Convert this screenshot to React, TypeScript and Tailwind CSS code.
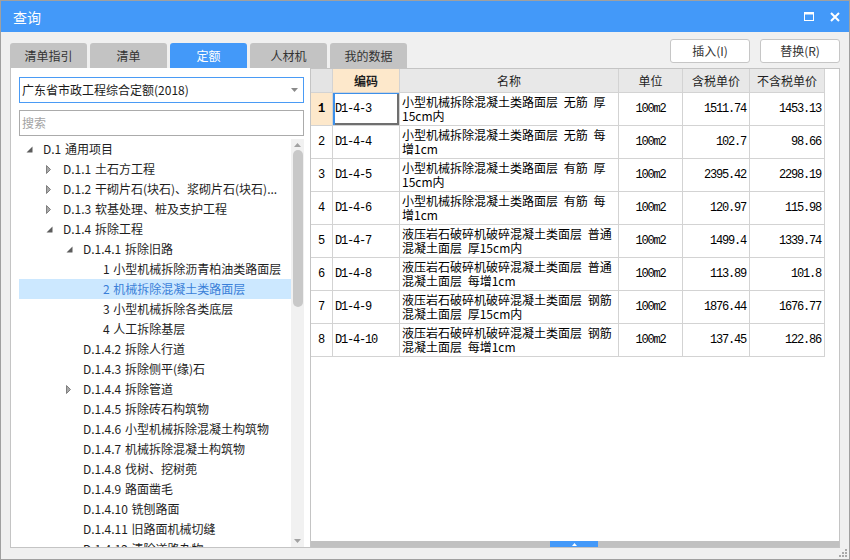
import React from 'react'

type Node = { level: number; kind: 'open' | 'closed' | 'leaf'; text: string; selected?: boolean }

const TREE: Node[] = [
  { level: 0, kind: 'open', text: 'D.1 通用项目' },
  { level: 1, kind: 'closed', text: 'D.1.1 土石方工程' },
  { level: 1, kind: 'closed', text: 'D.1.2 干砌片石(块石)、浆砌片石(块石)...' },
  { level: 1, kind: 'closed', text: 'D.1.3 软基处理、桩及支护工程' },
  { level: 1, kind: 'open', text: 'D.1.4 拆除工程' },
  { level: 2, kind: 'open', text: 'D.1.4.1 拆除旧路' },
  { level: 3, kind: 'leaf', text: '1 小型机械拆除沥青柏油类路面层' },
  { level: 3, kind: 'leaf', text: '2 机械拆除混凝土类路面层', selected: true },
  { level: 3, kind: 'leaf', text: '3 小型机械拆除各类底层' },
  { level: 3, kind: 'leaf', text: '4 人工拆除基层' },
  { level: 2, kind: 'leaf', text: 'D.1.4.2 拆除人行道' },
  { level: 2, kind: 'leaf', text: 'D.1.4.3 拆除侧平(缘)石' },
  { level: 2, kind: 'closed', text: 'D.1.4.4 拆除管道' },
  { level: 2, kind: 'leaf', text: 'D.1.4.5 拆除砖石构筑物' },
  { level: 2, kind: 'leaf', text: 'D.1.4.6 小型机械拆除混凝土构筑物' },
  { level: 2, kind: 'leaf', text: 'D.1.4.7 机械拆除混凝土构筑物' },
  { level: 2, kind: 'leaf', text: 'D.1.4.8 伐树、挖树蔸' },
  { level: 2, kind: 'leaf', text: 'D.1.4.9 路面凿毛' },
  { level: 2, kind: 'leaf', text: 'D.1.4.10 铣刨路面' },
  { level: 2, kind: 'leaf', text: 'D.1.4.11 旧路面机械切缝' },
  { level: 2, kind: 'leaf', text: 'D.1.4.12 清除道路杂物' },
]

const INDENT = ['pl-0', 'pl-5', 'pl-10', 'pl-15']

const ROWS = [
  { code: 'D1-4-3', name: ['小型机械拆除混凝土类路面层 无筋 厚', '15cm内'], tax: '1511.74', noTax: '1453.13' },
  { code: 'D1-4-4', name: ['小型机械拆除混凝土类路面层 无筋 每', '增1cm'], tax: '102.7', noTax: '98.66' },
  { code: 'D1-4-5', name: ['小型机械拆除混凝土类路面层 有筋 厚', '15cm内'], tax: '2395.42', noTax: '2298.19' },
  { code: 'D1-4-6', name: ['小型机械拆除混凝土类路面层 有筋 每', '增1cm'], tax: '120.97', noTax: '115.98' },
  { code: 'D1-4-7', name: ['液压岩石破碎机破碎混凝土类面层 普通', '混凝土面层 厚15cm内'], tax: '1499.4', noTax: '1339.74' },
  { code: 'D1-4-8', name: ['液压岩石破碎机破碎混凝土类面层 普通', '混凝土面层 每增1cm'], tax: '113.89', noTax: '101.8' },
  { code: 'D1-4-9', name: ['液压岩石破碎机破碎混凝土类面层 钢筋', '混凝土面层 厚15cm内'], tax: '1876.44', noTax: '1676.77' },
  { code: 'D1-4-10', name: ['液压岩石破碎机破碎混凝土类面层 钢筋', '混凝土面层 每增1cm'], tax: '137.45', noTax: '122.86' },
]

const TABS = ['清单指引', '清单', '定额', '人材机', '我的数据']

const COLS = 'grid grid-cols-[22px_67px_219px_64px_67px_75px]'
const CELL = 'border-r border-b border-[#d3d3d3] flex items-center'
const MONO = "font-['Liberation_Mono',monospace] text-[12px] tracking-[-1.2px]"

function Expander({ kind }: { kind: Node['kind'] }) {
  if (kind === 'open') {
    return (
      <svg width="7" height="7" viewBox="0 0 7 7">
        <path d="M6.5 0.5 L6.5 6.5 L0.5 6.5 Z" fill="#5c5c5c" />
      </svg>
    )
  }
  if (kind === 'closed') {
    return (
      <svg width="6" height="9" viewBox="0 0 6 9">
        <path d="M0.5 0.5 L4.5 4.5 L0.5 8.5 Z" fill="#a8a8a8" stroke="#808080" />
      </svg>
    )
  }
  return null
}

export default function App() {
  return (
    <div className="w-[850px] h-[560px] flex flex-col border border-[#a0a0a0] bg-[#f0f0f0] font-['Noto_Sans_CJK_SC',sans-serif] text-[#1e1e1e] overflow-hidden">
      {/* 标题栏 */}
      <div className="h-[31px] shrink-0 bg-[#4399f9] flex items-center pl-3 pr-[9px] text-white">
        <span className="text-[14px] leading-none">查询</span>
        <div className="ml-auto flex items-center gap-[16px]">
          <svg width="10" height="9" viewBox="0 0 10 9">
            <rect x="0.5" y="1" width="9" height="7.5" fill="none" stroke="#fff" strokeWidth="1" />
            <rect x="0" y="0" width="10" height="2.5" fill="#fff" />
          </svg>
          <svg width="10" height="10" viewBox="0 0 10 10">
            <path d="M1 1 L9 9 M9 1 L1 9" stroke="#fff" strokeWidth="2" />
          </svg>
        </div>
      </div>

      {/* 页签 + 按钮 */}
      <div className="h-[36px] shrink-0 flex items-end px-[9px]">
        <div className="flex gap-[3px]">
          {TABS.map((t) => (
            <div
              key={t}
              className={
                t === '定额'
                  ? 'w-[77px] h-[25px] rounded-t-[3px] bg-[#4399f9] text-white text-[12px] flex items-center justify-center'
                  : 'w-[77px] h-[25px] rounded-t-[3px] bg-[#c3c3c3] text-[#333] text-[12px] flex items-center justify-center'
              }
            >
              {t}
            </div>
          ))}
        </div>
        <div className="ml-auto self-start mt-[7px] flex gap-[10px]">
          <button className="w-[80px] h-[24px] bg-white border border-[#c6c6c6] rounded-[3px] text-[12px] text-[#333]">插入(I)</button>
          <button className="w-[80px] h-[24px] bg-white border border-[#c6c6c6] rounded-[3px] text-[12px] text-[#333]">替换(R)</button>
        </div>
      </div>

      {/* 主体 */}
      <div className="h-[480px] shrink-0 flex mx-[9px]">
        {/* 左侧定额树 */}
        <div className="w-[300px] shrink-0 bg-white border-l border-b border-[#c4c4c4] flex flex-col pl-[8px] pr-[6px]">
          <div className="mt-[9px] h-[26px] shrink-0 border border-[#4a9bf5] flex items-center pl-[2px] pr-[5px] text-[12px] text-[#1a1a1a]">
            <span>广东省市政工程综合定额(2018)</span>
            <svg className="ml-auto" width="7" height="4" viewBox="0 0 7 4">
              <path d="M0 0 L7 0 L3.5 4 Z" fill="#8a8a8a" />
            </svg>
          </div>
          <div className="mt-[7px] h-[26px] shrink-0 border border-[#ababab] flex items-center pl-[2px] text-[12px] text-[#a3a3a3]">
            搜索
          </div>
          <div className="mt-[3px] flex-1 min-h-0 flex">
            <div className="flex-1 overflow-hidden">
              {TREE.map((n, i) => (
                <div
                  key={i}
                  className={
                    (n.selected ? 'bg-[#cce8ff] text-[#3a7fd8] ' : '') +
                    'h-5 flex items-center text-[12px] whitespace-nowrap [word-spacing:1px] ' +
                    INDENT[n.level]
                  }
                >
                  <div className="w-6 shrink-0 flex items-center pl-[7px]">
                    <Expander kind={n.kind} />
                  </div>
                  <span>{n.text}</span>
                </div>
              ))}
            </div>
            <div className="w-[13px] shrink-0 bg-[#f1f1f1] flex flex-col items-center">
              <div className="h-[11px] flex items-center pt-[1px]">
                <svg width="7" height="4" viewBox="0 0 7 4">
                  <path d="M0 4 L7 4 L3.5 0 Z" fill="#a2a2a2" />
                </svg>
              </div>
              <div className="w-[10px] h-[157px] rounded-full bg-[#c8c8c8]" />
              <div className="flex-1" />
              <div className="h-[12px] flex items-center">
                <svg width="7" height="4" viewBox="0 0 7 4">
                  <path d="M0 0 L7 0 L3.5 4 Z" fill="#a2a2a2" />
                </svg>
              </div>
            </div>
          </div>
        </div>

        {/* 右侧表格 */}
        <div className="flex-1 bg-white border border-[#c4c4c4] flex flex-col min-w-0">
          <div className="flex-1 min-h-0">
            <div className={COLS + ' h-[24px] text-[12px]'}>
              <div className={CELL + ' bg-[#e4e4e4]'} />
              <div className={CELL + ' bg-[#fde8cb] justify-center font-bold'}>编码</div>
              <div className={CELL + ' bg-[#e8e8e8] justify-center'}>名称</div>
              <div className={CELL + ' bg-[#e8e8e8] justify-center'}>单位</div>
              <div className={CELL + ' bg-[#e8e8e8] justify-center'}>含税单价</div>
              <div className={CELL + ' bg-[#e8e8e8] justify-center'}>不含税单价</div>
            </div>
            {ROWS.map((r, i) => (
              <div key={r.code} className={COLS + ' h-[33px] text-black'}>
                <div
                  className={
                    CELL +
                    " justify-center font-['Liberation_Mono',monospace] text-[12px] " +
                    (i === 0 ? 'bg-[#fde8cb] font-bold' : '')
                  }
                >
                  {i + 1}
                </div>
                <div
                  className={
                    CELL + ' pl-[2px] ' + MONO + (i === 0 ? ' shadow-[inset_2px_1px_0_#3d90ea,inset_-2px_-2px_0_#6f6f6f]' : '')
                  }
                >
                  {r.code}
                </div>
                <div className={CELL + ' pl-[2px] text-[12px] leading-[14px] [word-spacing:3px]'}>
                  <div className="flex flex-col">
                    <span className="whitespace-nowrap">{r.name[0]}</span>
                    <span className="whitespace-nowrap">{r.name[1]}</span>
                  </div>
                </div>
                <div className={CELL + ' justify-center ' + MONO}>100m2</div>
                <div className={CELL + ' justify-end pr-[3px] ' + MONO}>{r.tax}</div>
                <div className={CELL + ' justify-end pr-[3px] ' + MONO}>{r.noTax}</div>
              </div>
            ))}
          </div>
          <div className="h-[6px] shrink-0 bg-[#c1c1c1] flex">
            <div className="ml-[239px] w-[48px] bg-[#4399f9] flex items-center justify-center">
              <svg width="5" height="3" viewBox="0 0 5 3">
                <path d="M0 3 L5 3 L2.5 0 Z" fill="#fff" />
              </svg>
            </div>
          </div>
        </div>
      </div>

      {/* 底部 */}
      <div className="flex-1 flex justify-end items-end pr-[1px] pb-[1px]">
        <svg width="10" height="10" viewBox="0 0 10 10">
          <rect x="7" y="1" width="2" height="2" fill="#a9a9a9" />
          <rect x="4" y="4" width="2" height="2" fill="#a9a9a9" />
          <rect x="7" y="4" width="2" height="2" fill="#a9a9a9" />
          <rect x="1" y="7" width="2" height="2" fill="#a9a9a9" />
          <rect x="4" y="7" width="2" height="2" fill="#a9a9a9" />
          <rect x="7" y="7" width="2" height="2" fill="#a9a9a9" />
        </svg>
      </div>
    </div>
  )
}
